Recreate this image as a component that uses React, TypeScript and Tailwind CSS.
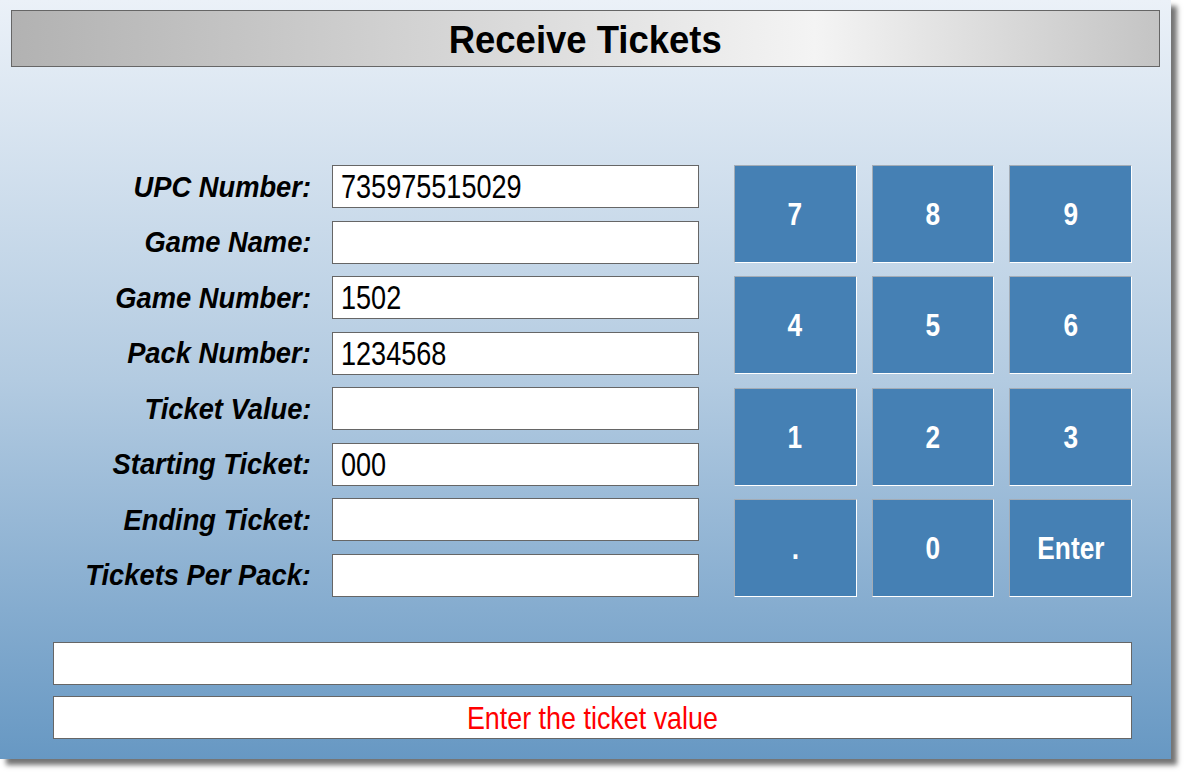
import React from "react";

const fields: { label: string; value: string }[] = [
  { label: "UPC Number:", value: "735975515029" },
  { label: "Game Name:", value: "" },
  { label: "Game Number:", value: "1502" },
  { label: "Pack Number:", value: "1234568" },
  { label: "Ticket Value:", value: "" },
  { label: "Starting Ticket:", value: "000" },
  { label: "Ending Ticket:", value: "" },
  { label: "Tickets Per Pack:", value: "" },
];

const keys = ["7", "8", "9", "4", "5", "6", "1", "2", "3", ".", "0", "Enter"];

export default function App() {
  return (
    <div className="w-[1186px] h-[775px] bg-white" style={{ fontFamily: '"Liberation Sans", Arial, sans-serif' }}>
      <div className="w-[1171px] h-[759px] pt-[10px] px-[11px] bg-gradient-to-b from-[#ebf1f8] via-[#b3cbe1] to-[#6798c3] shadow-[6px_6px_5px_rgba(0,0,0,0.55)] flex flex-col">
        {/* Title bar */}
        <div className="h-[57px] border border-[#666] bg-gradient-to-r from-[#b2b2b2] via-[#f4f4f4] via-70% to-[#c4c4c4] flex items-center justify-center pt-[3px]">
          <span className="inline-block text-[38px] font-bold text-black scale-x-[0.96] leading-none">Receive Tickets</span>
        </div>

        <div className="ml-[42px] w-[1079px] mt-[98px] flex">
          {/* Form */}
          <div className="flex gap-[21px]">
            <div className="w-[258px] h-[432px] flex flex-col justify-between">
              {fields.map((f) => (
                <div key={f.label} className="h-[43px] flex items-center justify-end">
                  <span className="inline-block origin-right scale-x-[0.91] text-[30px] font-bold italic text-black leading-none whitespace-nowrap">{f.label}</span>
                </div>
              ))}
            </div>
            <div className="w-[367px] h-[432px] flex flex-col justify-between">
              {fields.map((f) => (
                <div key={f.label} className="h-[43px] bg-white border border-[#666] flex items-center pl-[8px] overflow-hidden">
                  <span className="inline-block origin-left scale-x-[0.82] text-[33px] text-black leading-none whitespace-nowrap">{f.value}</span>
                </div>
              ))}
            </div>
          </div>

          {/* Keypad */}
          <div className="ml-[35px] w-[398px] grid grid-cols-3 gap-x-[15px] gap-y-[13px]">
            {keys.map((k) => (
              <button
                key={k}
                className="h-[98px] bg-[#4580b4] border border-t-[#a3acb6] border-l-[#a3acb6] border-r-white border-b-white flex items-center justify-center"
              >
                <span className="inline-block scale-x-[0.82] text-[32px] font-bold text-white leading-none">{k}</span>
              </button>
            ))}
          </div>
        </div>

        {/* Status bars */}
        <div className="ml-[42px] w-[1079px] mt-[45px] flex flex-col gap-[11px]">
          <div className="h-[43px] bg-white border border-[#666]" />
          <div className="h-[43px] bg-white border border-[#666] flex items-center justify-center">
            <span className="inline-block scale-x-[0.84] text-[32px] text-[#ff0000] leading-none whitespace-nowrap">Enter the ticket value</span>
          </div>
        </div>
      </div>
    </div>
  );
}
